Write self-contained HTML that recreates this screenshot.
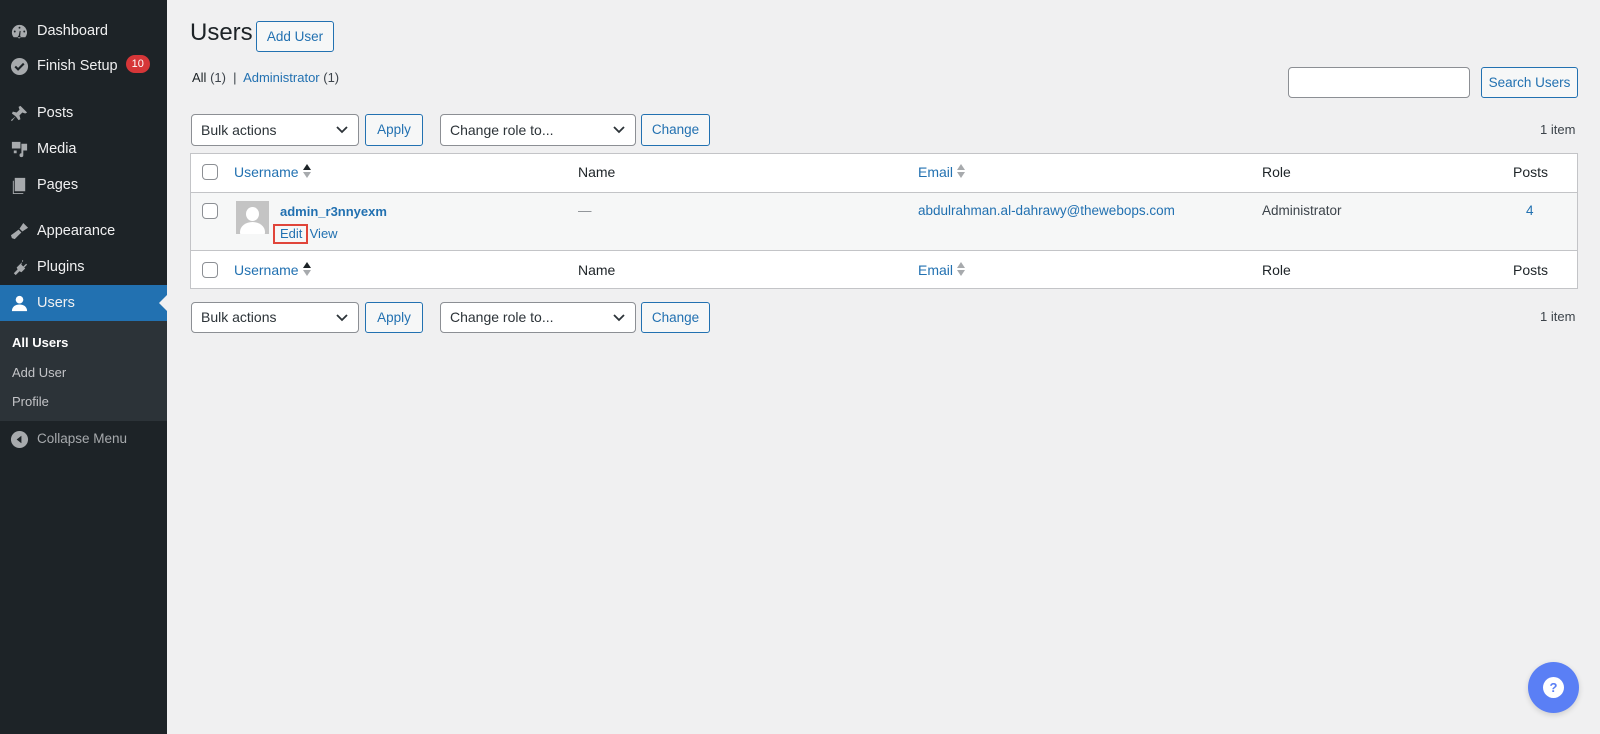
<!DOCTYPE html>
<html><head><style>
*{box-sizing:border-box;margin:0;padding:0}
body{width:1600px;height:734px;background:#f0f0f1;font-family:"Liberation Sans",sans-serif;font-size:13.5px;color:#3c434a;position:relative;overflow:hidden}
.sb{position:absolute;left:0;top:0;width:167px;height:734px;background:#1d2327}
.mi{position:absolute;left:0;width:167px;color:#f0f0f1;font-size:14.5px;height:34px;line-height:34px;padding-left:37px}
.ic{position:absolute;left:10px;top:8px;width:19px;height:19px;fill:#a7aaad}
.sub{position:absolute;left:0;top:321px;width:167px;height:100px;background:#2c3338}
.sub div{position:absolute;left:12px;color:#c3c4c7;font-size:13px}
.a{color:#2271b1}
.btn{position:absolute;border:1px solid #2271b1;color:#2271b1;background:#f6f7f7;border-radius:3px;text-align:center;font-size:13.5px}
.sel{position:absolute;border:1px solid #8c8f94;background:#fff;border-radius:4px;font-size:14px;color:#2c3338;padding-left:9px}
.sel svg{position:absolute;right:9px;top:10px}
.cb{position:absolute;width:16px;height:16px;border:1px solid #8c8f94;border-radius:4px;background:#fff}
.t{position:absolute;white-space:nowrap}
.so{display:inline-block;vertical-align:middle;margin-left:3px;position:relative;top:-2px}
</style></head><body>
<div class="sb">
 <div class="mi" style="top:14px"><svg class="ic" viewBox="0 0 20 20"><path d="M10 3a8 8 0 0 0-8 8c0 2 .7 3.7 1.9 5h12.2A8 8 0 0 0 10 3zm0 2a1 1 0 1 1 0 2 1 1 0 0 1 0-2zM5 9a1 1 0 1 1 0 2 1 1 0 0 1 0-2zm10 0a1 1 0 1 1 0 2 1 1 0 0 1 0-2zm-4.3 5.6a1.5 1.5 0 1 1-1.5-.3l1-5 1 .2z"/></svg>Dashboard</div>
 <div class="mi" style="top:49px"><svg class="ic" viewBox="0 0 20 20"><circle cx="10" cy="10" r="9"/><path d="M5.5 10l3 3 6-6" stroke="#1d2327" stroke-width="2.2" fill="none"/></svg>Finish Setup <span style="display:inline-block;background:#d63638;color:#fff;border-radius:10px;font-size:11px;line-height:18px;height:18px;padding:0 6px;margin-left:4px;vertical-align:middle;position:relative;top:-2px">10</span></div>
 <div class="mi" style="top:96px"><svg class="ic" viewBox="0 0 20 20"><path d="M11 2l7 7-2 1-3-1-3 3 1 4-2 1-3-4-4 5-1-1 5-4-4-3 1-2 4 1 3-3-1-3z"/></svg>Posts</div>
 <div class="mi" style="top:132px"><svg class="ic" viewBox="0 0 20 20"><path d="M2 2h9v7H2zM4 11h3v3H4zm8-7h6v7h-4v5a2 2 0 1 1-2-2z"/></svg>Media</div>
 <div class="mi" style="top:168px"><svg class="ic" viewBox="0 0 20 20"><path d="M5 2h11v14H5zM3 5h1v13h10v1H3z"/></svg>Pages</div>
 <div class="mi" style="top:214px"><svg class="ic" viewBox="0 0 20 20"><path d="M14 1l5 5-6 4-3-3zM9 8l3 3-3 3-4 4-3-1-1-3 4-3z"/></svg>Appearance</div>
 <div class="mi" style="top:250px"><svg class="ic" viewBox="0 0 20 20"><path d="M13 2l1 1-3 3 3 3 3-3 1 1-3 3 1 1-4 4-2-1-4 4-2-2 4-4-1-2 4-4 1 1z"/></svg>Plugins</div>
 <div class="mi" style="top:285px;height:36px;line-height:36px;background:#2271b1"><svg class="ic" viewBox="0 0 20 20" style="fill:#fff;top:9px"><circle cx="10" cy="6" r="4"/><path d="M2 18c0-5 4-7 8-7s8 2 8 7z"/></svg>Users<div style="position:absolute;right:0;top:10px;border:8px solid transparent;border-right-color:#f0f0f1"></div></div>
 <div class="sub"><div style="top:14px;color:#fff;font-weight:bold">All Users</div><div style="top:44px">Add User</div><div style="top:73px">Profile</div></div>
 <div class="mi" style="top:422px;color:#a7aaad;font-size:13.5px"><svg class="ic" viewBox="0 0 20 20"><circle cx="10" cy="10" r="9"/><path d="M12 6v8l-5-4z" fill="#1d2327"/></svg>Collapse Menu</div>
</div>

<div class="t" style="left:190px;top:19px;font-size:24px;color:#1d2327">Users</div>
<div class="btn" style="left:256px;top:21px;width:78px;height:31px;line-height:29px">Add User</div>
<div class="t" style="left:192px;top:70px;font-size:13px"><span style="color:#1d2327">All</span> (1) &nbsp;|&nbsp; <span class="a">Administrator</span> (1)</div>
<div style="position:absolute;left:1288px;top:67px;width:182px;height:31px;border:1px solid #8c8f94;border-radius:4px;background:#fff"></div>
<div class="btn" style="left:1481px;top:67px;width:97px;height:31px;line-height:29px">Search Users</div>

<div class="sel" style="left:191px;top:114px;width:168px;height:32px;line-height:30px">Bulk actions<svg width="14" height="10" viewBox="0 0 14 10"><path d="M2 2l5 5 5-5" stroke="#2c3338" stroke-width="1.8" fill="none"/></svg></div>
<div class="btn" style="left:365px;top:114px;width:58px;height:32px;line-height:30px">Apply</div>
<div class="sel" style="left:440px;top:114px;width:196px;height:32px;line-height:30px">Change role to...<svg width="14" height="10" viewBox="0 0 14 10"><path d="M2 2l5 5 5-5" stroke="#2c3338" stroke-width="1.8" fill="none"/></svg></div>
<div class="btn" style="left:641px;top:114px;width:69px;height:32px;line-height:30px">Change</div>
<div class="t" style="left:1540px;top:122px;font-size:13px">1 item</div>

<div style="position:absolute;left:190px;top:153px;width:1388px;height:136px;border:1px solid #c3c4c7;background:#fff">
 <div style="position:absolute;left:0;top:38px;width:100%;height:59px;background:#f6f7f7;border-top:1px solid #c3c4c7;border-bottom:1px solid #c3c4c7"></div>
</div>
<div class="cb" style="left:202px;top:164px"></div>
<div class="t a" style="left:234px;top:164px;font-size:14px">Username<svg class="so" width="10" height="16" viewBox="0 0 10 16"><path d="M1 7l4-6 4 6z" fill="#1d2327"/><path d="M1 9l4 6 4-6z" fill="#a7aaad"/></svg></div>
<div class="t" style="left:578px;top:164px;font-size:14px;color:#1d2327">Name</div>
<div class="t a" style="left:918px;top:164px;font-size:14px">Email<svg class="so" width="10" height="16" viewBox="0 0 10 16"><path d="M1 7l4-6 4 6z" fill="#a7aaad"/><path d="M1 9l4 6 4-6z" fill="#a7aaad"/></svg></div>
<div class="t" style="left:1262px;top:164px;font-size:14px;color:#1d2327">Role</div>
<div class="t" style="left:1513px;top:164px;font-size:14px;color:#1d2327">Posts</div>
<div class="cb" style="left:202px;top:203px"></div>
<div style="position:absolute;left:236px;top:201px;width:33px;height:33px;background:#c4c4c4;overflow:hidden"><div style="position:absolute;left:10px;top:6px;width:13px;height:14px;border-radius:50%;background:#fff"></div><div style="position:absolute;left:4px;top:21px;width:25px;height:20px;border-radius:50%;background:#fff"></div></div>
<div class="t a" style="left:280px;top:204px;font-weight:bold;font-size:13px">admin_r3nnyexm</div>
<div class="t" style="left:273px;top:224px;width:35px;height:20px;border:2px solid #e0453a"></div>
<div class="t a" style="left:280px;top:226px;font-size:13px">Edit &nbsp;View</div>
<div class="t" style="left:578px;top:203px;color:#8c8f94">—</div>
<div class="t a" style="left:918px;top:203px;font-size:13.5px">abdulrahman.al-dahrawy@thewebops.com</div>
<div class="t" style="left:1262px;top:203px;font-size:13.5px">Administrator</div>
<div class="t a" style="left:1526px;top:203px">4</div>
<div class="cb" style="left:202px;top:262px"></div>
<div class="t a" style="left:234px;top:262px;font-size:14px">Username<svg class="so" width="10" height="16" viewBox="0 0 10 16"><path d="M1 7l4-6 4 6z" fill="#1d2327"/><path d="M1 9l4 6 4-6z" fill="#a7aaad"/></svg></div>
<div class="t" style="left:578px;top:262px;font-size:14px;color:#1d2327">Name</div>
<div class="t a" style="left:918px;top:262px;font-size:14px">Email<svg class="so" width="10" height="16" viewBox="0 0 10 16"><path d="M1 7l4-6 4 6z" fill="#a7aaad"/><path d="M1 9l4 6 4-6z" fill="#a7aaad"/></svg></div>
<div class="t" style="left:1262px;top:262px;font-size:14px;color:#1d2327">Role</div>
<div class="t" style="left:1513px;top:262px;font-size:14px;color:#1d2327">Posts</div>

<div class="sel" style="left:191px;top:302px;width:168px;height:31px;line-height:29px">Bulk actions<svg width="14" height="10" viewBox="0 0 14 10"><path d="M2 2l5 5 5-5" stroke="#2c3338" stroke-width="1.8" fill="none"/></svg></div>
<div class="btn" style="left:365px;top:302px;width:58px;height:31px;line-height:29px">Apply</div>
<div class="sel" style="left:440px;top:302px;width:196px;height:31px;line-height:29px">Change role to...<svg width="14" height="10" viewBox="0 0 14 10"><path d="M2 2l5 5 5-5" stroke="#2c3338" stroke-width="1.8" fill="none"/></svg></div>
<div class="btn" style="left:641px;top:302px;width:69px;height:31px;line-height:29px">Change</div>
<div class="t" style="left:1540px;top:309px;font-size:13px">1 item</div>

<div style="position:absolute;left:1528px;top:662px;width:51px;height:51px;border-radius:50%;background:#5a7ff5;box-shadow:0 2px 6px rgba(0,0,0,.15)"><div style="position:absolute;left:15px;top:15px;width:21px;height:21px;border-radius:50%;background:#fff;color:#5a7ff5;font-weight:bold;font-size:13px;text-align:center;line-height:21px">?</div></div>
</body></html>
